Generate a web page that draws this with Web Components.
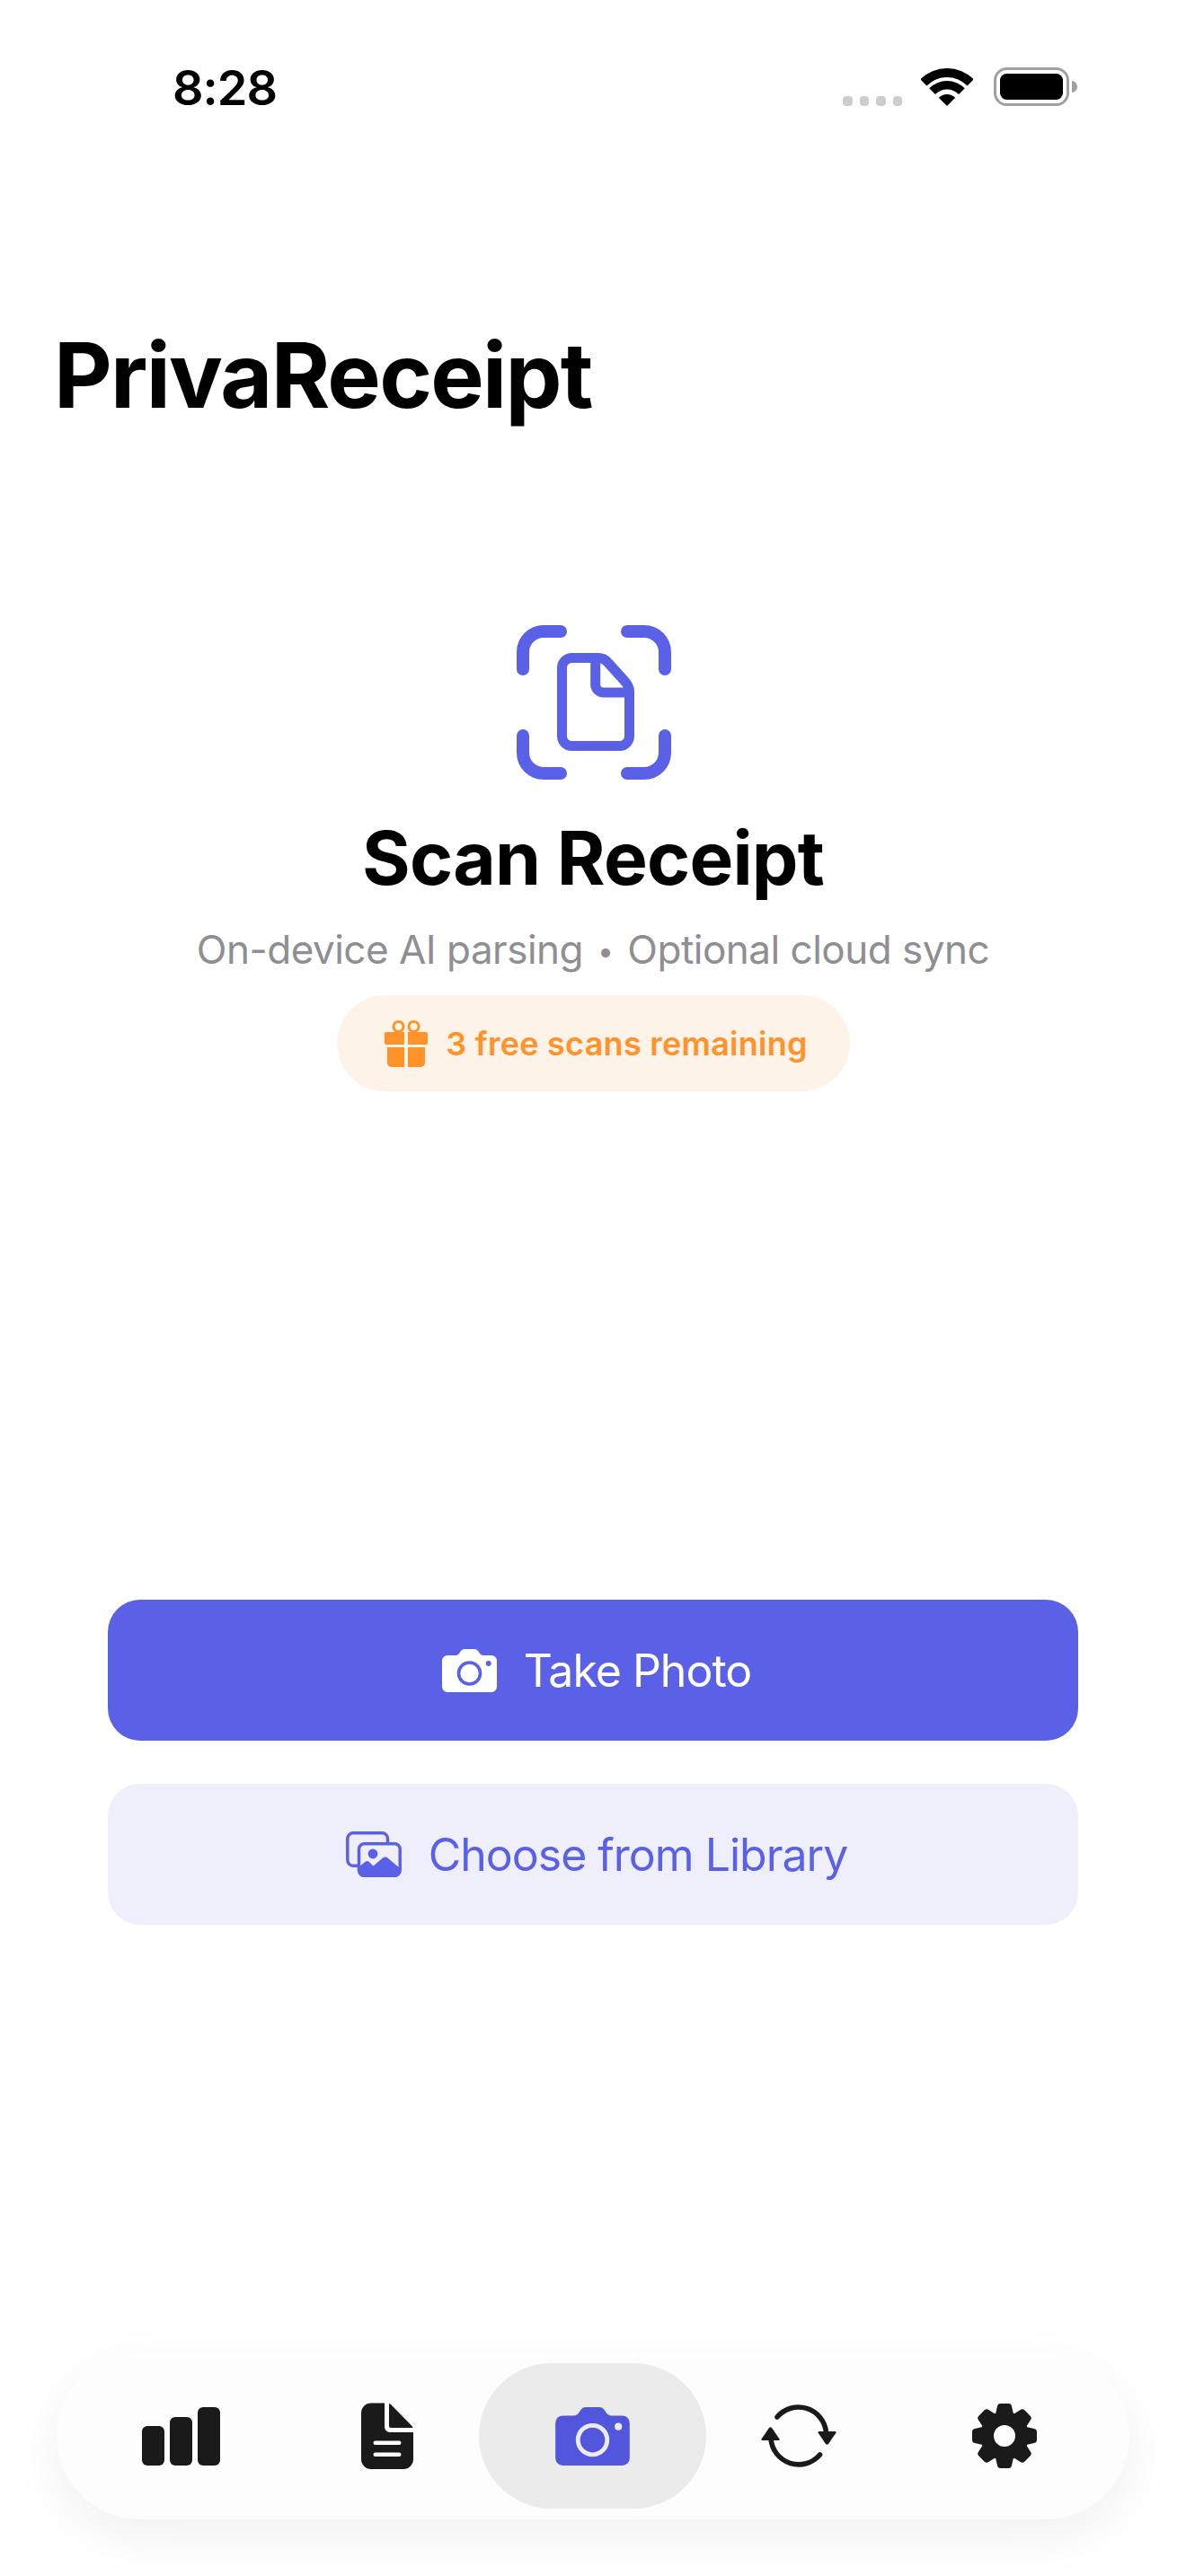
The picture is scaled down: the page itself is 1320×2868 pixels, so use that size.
<!DOCTYPE html>
<html lang="en">
<head>
<meta charset="utf-8">
<title>PrivaReceipt</title>
<style>
    html, body { margin: 0; padding: 0; background: #fff; }
    body { font-family: Inter, "Noto Sans", sans-serif; color: #000; }
</style>
</head>
<body>
<scan-screen>
    <status-bar time="8:28"></status-bar>
    <app-title>PrivaReceipt</app-title>
    <scan-hero heading="Scan Receipt" note="On-device AI parsing • Optional cloud sync">
        <free-badge>3 free scans remaining</free-badge>
    </scan-hero>
    <action-buttons>
        <action-button kind="primary" icon="camera">Take Photo</action-button>
        <action-button kind="secondary" icon="library">Choose from Library</action-button>
    </action-buttons>
    <tab-bar>
        <tab-item icon="bars" label="Insights"></tab-item>
        <tab-item icon="doc" label="Receipts"></tab-item>
        <tab-item icon="camera" label="Scan" active></tab-item>
        <tab-item icon="sync" label="Sync"></tab-item>
        <tab-item icon="gear" label="Settings"></tab-item>
    </tab-bar>
</scan-screen>

<script>
// shared icon drawings, sizes are the real pixel sizes in the screenshot
const CAMERA_PATH = 'M6 7H15c2 0 3-1 4-2l2-3c1-1 2-2 4-2h11c2 0 3 1 4 2l2 3c1 1 2 2 4 2h9a6 6 0 0 1 6 6v29a6 6 0 0 1-6 6H6a6 6 0 0 1-6-6V13a6 6 0 0 1 6-6z';

function cameraIcon(w, h, fill, cut) {
    return `<svg width="${w}" height="${h}" viewBox="0 0 61 48" aria-hidden="true">
        <path d="${CAMERA_PATH}" fill="${fill}"/>
        <circle cx="30.5" cy="27" r="12" fill="none" stroke="${cut}" stroke-width="3.6"/>
        <circle cx="51.7" cy="16" r="3" fill="${cut}"/>
    </svg>`;
}

const libraryIcon = `<svg width="62" height="51" viewBox="0 0 62 51" aria-hidden="true">
    <path d="M46.5 12V8a6.2 6.2 0 0 0-6.2-6.2H8A6.2 6.2 0 0 0 1.8 8v24A6.2 6.2 0 0 0 8 38.2h5" fill="none" stroke="currentColor" stroke-width="3.5"/>
    <rect x="14.5" y="13.8" width="45.7" height="35.4" rx="6" fill="none" stroke="currentColor" stroke-width="3.5"/>
    <circle cx="30" cy="25" r="5.4" fill="currentColor"/>
    <path d="M15 39L22 33.5Q24 32.5 26 34L30.5 38.5L41 29.5Q44 27.5 47 30L60 41V45a6 6 0 0 1-6 6H20a6 6 0 0 1-6-6z" fill="currentColor"/>
</svg>`;

const TAB_ICONS = {
    bars: `<svg width="87" height="65" viewBox="0 0 87 65" fill="#1a1a1a" aria-hidden="true">
        <rect x="0" y="21" width="25" height="44" rx="6"/>
        <rect x="31" y="11" width="25" height="54" rx="6"/>
        <rect x="62" y="0" width="25" height="65" rx="6"/>
    </svg>`,
    doc: `<svg width="58" height="74" viewBox="0 0 58 74" fill="#1a1a1a" aria-hidden="true">
        <path d="M11 0.5H26V27a6 6 0 0 0 6 6H58V63a11 11 0 0 1-11 11H11A11 11 0 0 1 0 63V11.5A11 11 0 0 1 11 0.5z"/>
        <path d="M31 1.5Q32 1 33 2L57 26.5Q58 28 57 28H33a2 2 0 0 1-2-2z"/>
        <rect x="13.5" y="42.5" width="31" height="4.5" rx="2.2" fill="#fdfdfd"/>
        <rect x="13.5" y="55.5" width="31" height="4.5" rx="2.2" fill="#fdfdfd"/>
    </svg>`,
    sync: `<svg width="84" height="70" viewBox="0 0 84 70" aria-hidden="true">
        <path d="M18 14A31 31 0 0 1 72.500 31" fill="none" stroke="#1a1a1a" stroke-width="5.600" stroke-linecap="round"/>
        <path d="M65.500 56A31 31 0 0 1 11 38" fill="none" stroke="#1a1a1a" stroke-width="5.600" stroke-linecap="round"/>
        <path d="M64.500 30H82.500Q84 30 83.500 31.500L75 44Q73.500 45.500 72 44L63.500 31.500Q63 30 64.500 30z" fill="#1a1a1a"/>
        <path d="M1.500 40H19.500Q21 40 20.500 38.500L12 26Q10.500 24.500 9 26L0.500 38.500Q0 40 1.500 40z" fill="#1a1a1a"/>
    </svg>`,
    gear: `<svg width="72" height="72" viewBox="0 0 72 72" aria-hidden="true">
        <circle cx="36" cy="36" r="19.500" fill="none" stroke="#1a1a1a" stroke-width="15"/>
        <g fill="#1a1a1a">
            ${[0, 45, 90, 135, 180, 225, 270, 315].map(a =>
                `<path transform="rotate(${a} 36 36)" d="M25.500 14L28 3Q28.500 0 31.500 0H40.500Q43.500 0 44 3L46.500 14z"/>`).join('')}
        </g>
    </svg>`,
    camera: cameraIcon(83, 65, '#5256dc', '#ebebeb'),
};

class ScanScreen extends HTMLElement {
    constructor() {
        super();
        this.attachShadow({ mode: 'open' });
        this.shadowRoot.innerHTML = `
            <style>
                :host {
                    display: flex;
                    flex-direction: column;
                    width: 1320px;
                    height: 2868px;
                    overflow: hidden;
                    background: #fff;
                }
            </style>
            <slot></slot>
        `;
    }
}

class StatusBar extends HTMLElement {
    constructor() {
        super();
        this.attachShadow({ mode: 'open' });
    }

    connectedCallback() {
        this.shadowRoot.innerHTML = `
            <style>
                :host {
                    display: flex;
                    align-items: flex-start;
                    justify-content: space-between;
                    height: 200px;
                    padding: 67px 121px 0 192px;
                    box-sizing: border-box;
                }
                .time {
                    font-size: 54px;
                    line-height: 62px;
                    font-weight: 600;
                    letter-spacing: -1px;
                    color: #000;
                }
                .right {
                    display: flex;
                    align-items: flex-end;
                    margin-top: 8px;
                }
                .dots {
                    display: flex;
                    gap: 8px;
                    margin-right: 21px;
                }
                .dots i {
                    width: 10.500px;
                    height: 11px;
                    border-radius: 4px;
                    background: #cdcdcd;
                }
                svg { display: block; }
                .wifi { margin-right: 23px; }
            </style>
            <span class="time">${this.getAttribute('time')}</span>
            <div class="right">
                <div class="dots"><i></i><i></i><i></i><i></i></div>
                <svg class="wifi" width="58" height="42" viewBox="0 0 58 42" aria-hidden="true">
                    <path d="M-0.700 12.300A42 42 0 0 1 58.700 12.300L51.600 19.400A32 32 0 0 0 6.400 19.400z"/>
                    <path d="M9.200 22.200A28 28 0 0 1 48.800 22.200L42.100 28.900A18.500 18.500 0 0 0 15.900 28.900z"/>
                    <path d="M19.800 32.800A13 13 0 0 1 38.200 32.800L29 42z"/>
                </svg>
                <svg width="93" height="43" viewBox="0 0 93 43" aria-hidden="true">
                    <rect x="1.500" y="1.500" width="81" height="40" rx="13" fill="none" stroke="#a0a0a0" stroke-width="3"/>
                    <rect x="7" y="7" width="70" height="29" rx="7.500" fill="#000"/>
                    <path d="M87 15a6 6.500 0 0 1 0 13z" fill="#a0a0a0"/>
                </svg>
            </div>
        `;
    }
}

class AppTitle extends HTMLElement {
    constructor() {
        super();
        this.attachShadow({ mode: 'open' });
        this.shadowRoot.innerHTML = `
            <style>
                :host {
                    display: block;
                    padding: 0 60px;
                    font-size: 100px;
                    line-height: 116px;
                    font-weight: 700;
                    letter-spacing: -1.750px;
                    color: #000;
                    margin-top: 160px;
                }
            </style>
            <slot></slot>
        `;
    }
}

class ScanHero extends HTMLElement {
    constructor() {
        super();
        this.attachShadow({ mode: 'open' });
    }

    connectedCallback() {
        const note = this.getAttribute('note').replace('•', '<span class="dot">•</span>');
        this.shadowRoot.innerHTML = `
            <style>
                :host {
                    display: flex;
                    flex-direction: column;
                    align-items: center;
                    margin-top: 220px;
                }
                svg { display: block; margin-left: 2px; }
                h1 {
                    margin: 40px 0 0;
                    font-size: 82px;
                    line-height: 96px;
                    font-weight: 700;
                    letter-spacing: -0.800px;
                    color: #000;
                }
                p {
                    margin: 26px 0 0;
                    font-size: 44px;
                    line-height: 54px;
                    font-weight: 400;
                    letter-spacing: -0.500px;
                    color: #8e8e93;
                }
                .dot {
                    font-size: 32px;
                    line-height: 0;
                    vertical-align: 3px;
                    padding: 0 4px;
                }
            </style>
            <svg width="172" height="172" viewBox="0 0 172 172" fill="none" stroke="#5b61e6" aria-hidden="true">
                <g stroke-width="14" stroke-linecap="round">
                    <path d="M7 49V30A23 23 0 0 1 30 7H49"/>
                    <path d="M123 7H142A23 23 0 0 1 165 30V49"/>
                    <path d="M7 123V142A23 23 0 0 0 30 165H49"/>
                    <path d="M123 165H142A23 23 0 0 0 165 142V123"/>
                </g>
                <g stroke-width="11">
                    <path d="M61.500 36.500H91Q97 36.500 101 41L120 62Q125.500 68 125.500 74V123.500A11 11 0 0 1 114.500 134.500H61.500A11 11 0 0 1 50.500 123.500V47.500A11 11 0 0 1 61.500 36.500z"/>
                    <path d="M87.700 36.500V66A9 9 0 0 0 96.700 75H125"/>
                </g>
            </svg>
            <h1>${this.getAttribute('heading')}</h1>
            <p>${note}</p>
            <slot></slot>
        `;
    }
}

class FreeBadge extends HTMLElement {
    constructor() {
        super();
        this.attachShadow({ mode: 'open' });
        this.shadowRoot.innerHTML = `
            <style>
                :host {
                    display: flex;
                    align-items: center;
                    justify-content: center;
                    gap: 20px;
                    width: 571px;
                    height: 107px;
                    box-sizing: border-box;
                    padding-left: 7px;
                    margin-top: 24px;
                    border-radius: 54px;
                    background: #fef3e9;
                    color: #ff9228;
                    font-size: 36px;
                    font-weight: 600;
                    letter-spacing: 0.250px;
                }
                svg { display: block; }
            </style>
            <svg width="48" height="52" viewBox="0 0 48 52" fill="currentColor" aria-hidden="true">
                <circle cx="15.500" cy="7" r="5.500" fill="none" stroke="currentColor" stroke-width="3"/>
                <circle cx="32.500" cy="7" r="5.500" fill="none" stroke="currentColor" stroke-width="3"/>
                <path d="M2 13H22V27H2a2 2 0 0 1-2-2V15a2 2 0 0 1 2-2z"/>
                <path d="M26 13H46a2 2 0 0 1 2 2V25a2 2 0 0 1-2 2H26z"/>
                <path d="M3 30H22V52H8a5 5 0 0 1-5-5z"/>
                <path d="M26 30H45V47a5 5 0 0 1-5 5H26z"/>
            </svg>
            <slot></slot>
        `;
    }
}

class ActionButtons extends HTMLElement {
    constructor() {
        super();
        this.attachShadow({ mode: 'open' });
        this.shadowRoot.innerHTML = `
            <style>
                :host {
                    display: flex;
                    flex-direction: column;
                    gap: 48px;
                    margin: 566px 120px 0;
                }
            </style>
            <slot></slot>
        `;
    }
}

class ActionButton extends HTMLElement {
    constructor() {
        super();
        this.attachShadow({ mode: 'open' });
    }

    connectedCallback() {
        const primary = this.getAttribute('kind') === 'primary';
        const icon = this.getAttribute('icon') === 'camera'
            ? cameraIcon(61, 48, '#fff', '#5b61e6')
            : libraryIcon;
        this.shadowRoot.innerHTML = `
            <style>
                :host {
                    display: flex;
                    align-items: center;
                    justify-content: center;
                    gap: 30px;
                    height: 157px;
                    box-sizing: border-box;
                    padding-left: 8px;
                    border-radius: 36px;
                    font-size: 50px;
                    font-weight: 400;
                    letter-spacing: -1px;
                    background: ${primary ? '#5b61e6' : '#efeffc'};
                    color: ${primary ? '#fff' : '#5b61e6'};
                }
                svg { display: block; }
            </style>
            ${icon}
            <slot></slot>
        `;
    }
}

class TabBar extends HTMLElement {
    constructor() {
        super();
        this.attachShadow({ mode: 'open' });
        this.shadowRoot.innerHTML = `
            <style>
                :host {
                    display: grid;
                    grid-template-columns: repeat(5, 229px);
                    align-items: stretch;
                    margin: auto 63px 63px;
                    padding: 12px 25px 12px 24px;
                    height: 186px;
                    box-sizing: border-box;
                    border-radius: 93px;
                    background: #fdfdfd;
                    box-shadow: 0 18px 60px rgba(0, 0, 0, 0.06);
                }
            </style>
            <slot></slot>
        `;
    }
}

class TabItem extends HTMLElement {
    constructor() {
        super();
        this.attachShadow({ mode: 'open' });
    }

    connectedCallback() {
        this.setAttribute('aria-label', this.getAttribute('label'));
        this.shadowRoot.innerHTML = `
            <style>
                :host {
                    display: flex;
                    align-items: center;
                    justify-content: center;
                    border-radius: 81px;
                }
                :host([active]) {
                    margin: 0 -12px;
                    background: #ebebeb;
                }
                svg { display: block; }
            </style>
            ${TAB_ICONS[this.getAttribute('icon')]}
        `;
    }
}

customElements.define('scan-screen', ScanScreen);
customElements.define('status-bar', StatusBar);
customElements.define('app-title', AppTitle);
customElements.define('scan-hero', ScanHero);
customElements.define('free-badge', FreeBadge);
customElements.define('action-buttons', ActionButtons);
customElements.define('action-button', ActionButton);
customElements.define('tab-bar', TabBar);
customElements.define('tab-item', TabItem);
</script>
</body>
</html>
